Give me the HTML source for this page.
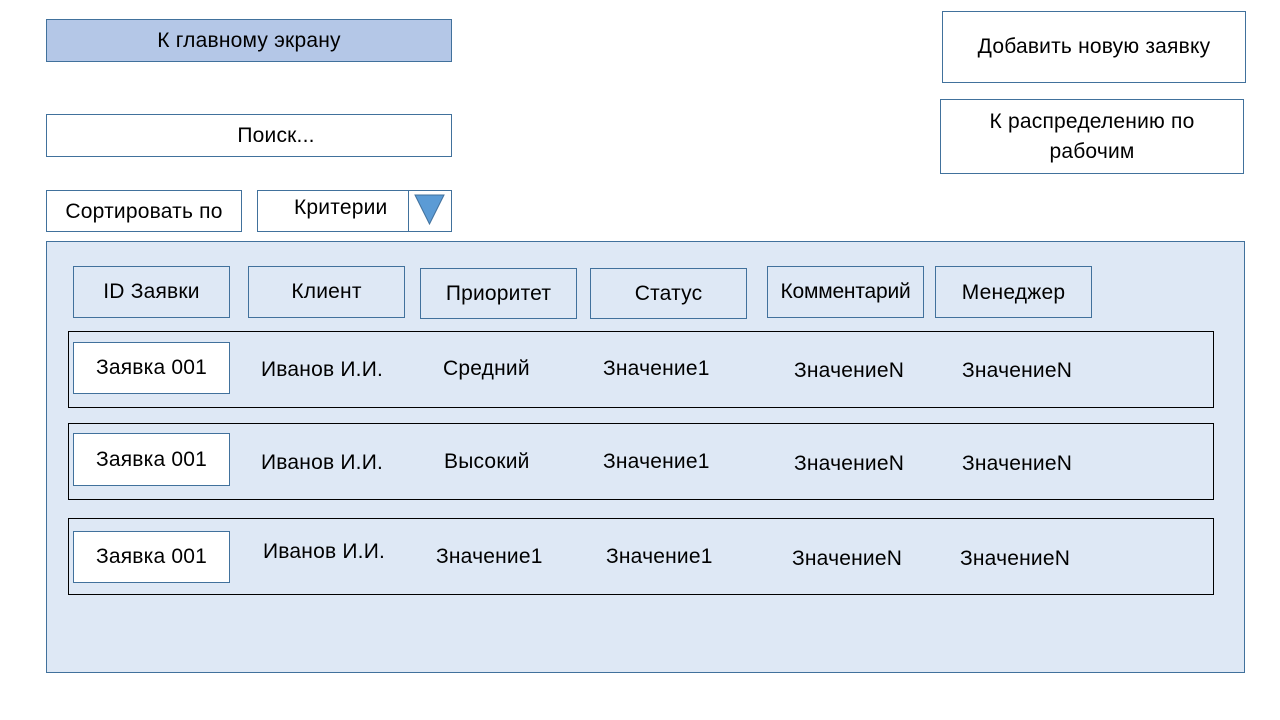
<!DOCTYPE html>
<html><head><meta charset="utf-8"><style>
body{margin:0;width:1280px;height:720px;background:#fff;position:relative;overflow:hidden;font-family:"Liberation Sans",sans-serif;font-size:21px;color:#000;letter-spacing:0.2px}
.b{position:absolute;box-sizing:border-box;border:1px solid #41719c;display:flex;align-items:center;justify-content:center;text-align:center;line-height:30px}
.r{position:absolute;box-sizing:border-box;border:1px solid #000}
.t{position:absolute;white-space:nowrap;line-height:24px}
</style></head><body>
<div class="b" style="left:46px;top:19px;width:406px;height:43px;background:#b4c7e7">К главному экрану</div>
<div class="b" style="left:942px;top:11px;width:304px;height:72px;background:#fff">Добавить новую заявку</div>
<div class="b" style="left:940px;top:99px;width:304px;height:75px;background:#fff">К распределению по<br>рабочим</div>
<div class="b" style="left:46px;top:114px;width:406px;height:43px;background:#fff;padding-left:54px">Поиск...</div>
<div class="b" style="left:46px;top:190px;width:196px;height:42px;background:#fff;padding-top:2px">Сортировать по</div>
<div class="b" style="left:257px;top:190px;width:195px;height:42px;background:#fff;justify-content:flex-start;padding-left:36px;padding-bottom:6px">Критерии</div>
<div style="position:absolute;left:408px;top:190px;width:1px;height:42px;background:#41719c"></div>
<svg style="position:absolute;left:414px;top:194px" width="32" height="32"><polygon points="1,1 30,1 15.5,30" fill="#5b9bd5" stroke="#41719c" stroke-width="1"/></svg>
<div class="b" style="left:46px;top:241px;width:1199px;height:432px;background:#dee8f5"></div>
<div class="b" style="left:73px;top:266px;width:157px;height:52px;background:#dee8f5">ID Заявки</div>
<div class="b" style="left:248px;top:266px;width:157px;height:52px;background:#dee8f5">Клиент</div>
<div class="b" style="left:420px;top:268px;width:157px;height:51px;background:#dee8f5">Приоритет</div>
<div class="b" style="left:590px;top:268px;width:157px;height:51px;background:#dee8f5">Статус</div>
<div class="b" style="left:767px;top:266px;width:157px;height:52px;background:#dee8f5;letter-spacing:-0.2px">Комментарий</div>
<div class="b" style="left:935px;top:266px;width:157px;height:52px;background:#dee8f5;padding-top:2px">Менеджер</div>

<div class="r" style="left:68px;top:331px;width:1146px;height:77px"></div>
<div class="r" style="left:68px;top:423px;width:1146px;height:77px"></div>
<div class="r" style="left:68px;top:518px;width:1146px;height:77px"></div>

<div class="b" style="left:73px;top:342px;width:157px;height:52px;background:#fff">Заявка 001</div>
<div class="b" style="left:73px;top:433px;width:157px;height:53px;background:#fff">Заявка 001</div>
<div class="b" style="left:73px;top:531px;width:157px;height:52px;background:#fff">Заявка 001</div>

<div class="t" style="left:261px;top:358px">Иванов И.И.</div>
<div class="t" style="left:443px;top:357px">Средний</div>
<div class="t" style="left:603px;top:357px">Значение1</div>
<div class="t" style="left:794px;top:359px">ЗначениеN</div>
<div class="t" style="left:962px;top:359px">ЗначениеN</div>

<div class="t" style="left:261px;top:451px">Иванов И.И.</div>
<div class="t" style="left:444px;top:450px">Высокий</div>
<div class="t" style="left:603px;top:450px">Значение1</div>
<div class="t" style="left:794px;top:452px">ЗначениеN</div>
<div class="t" style="left:962px;top:452px">ЗначениеN</div>

<div class="t" style="left:263px;top:540px">Иванов И.И.</div>
<div class="t" style="left:436px;top:545px">Значение1</div>
<div class="t" style="left:606px;top:545px">Значение1</div>
<div class="t" style="left:792px;top:547px">ЗначениеN</div>
<div class="t" style="left:960px;top:547px">ЗначениеN</div>
</body></html>
